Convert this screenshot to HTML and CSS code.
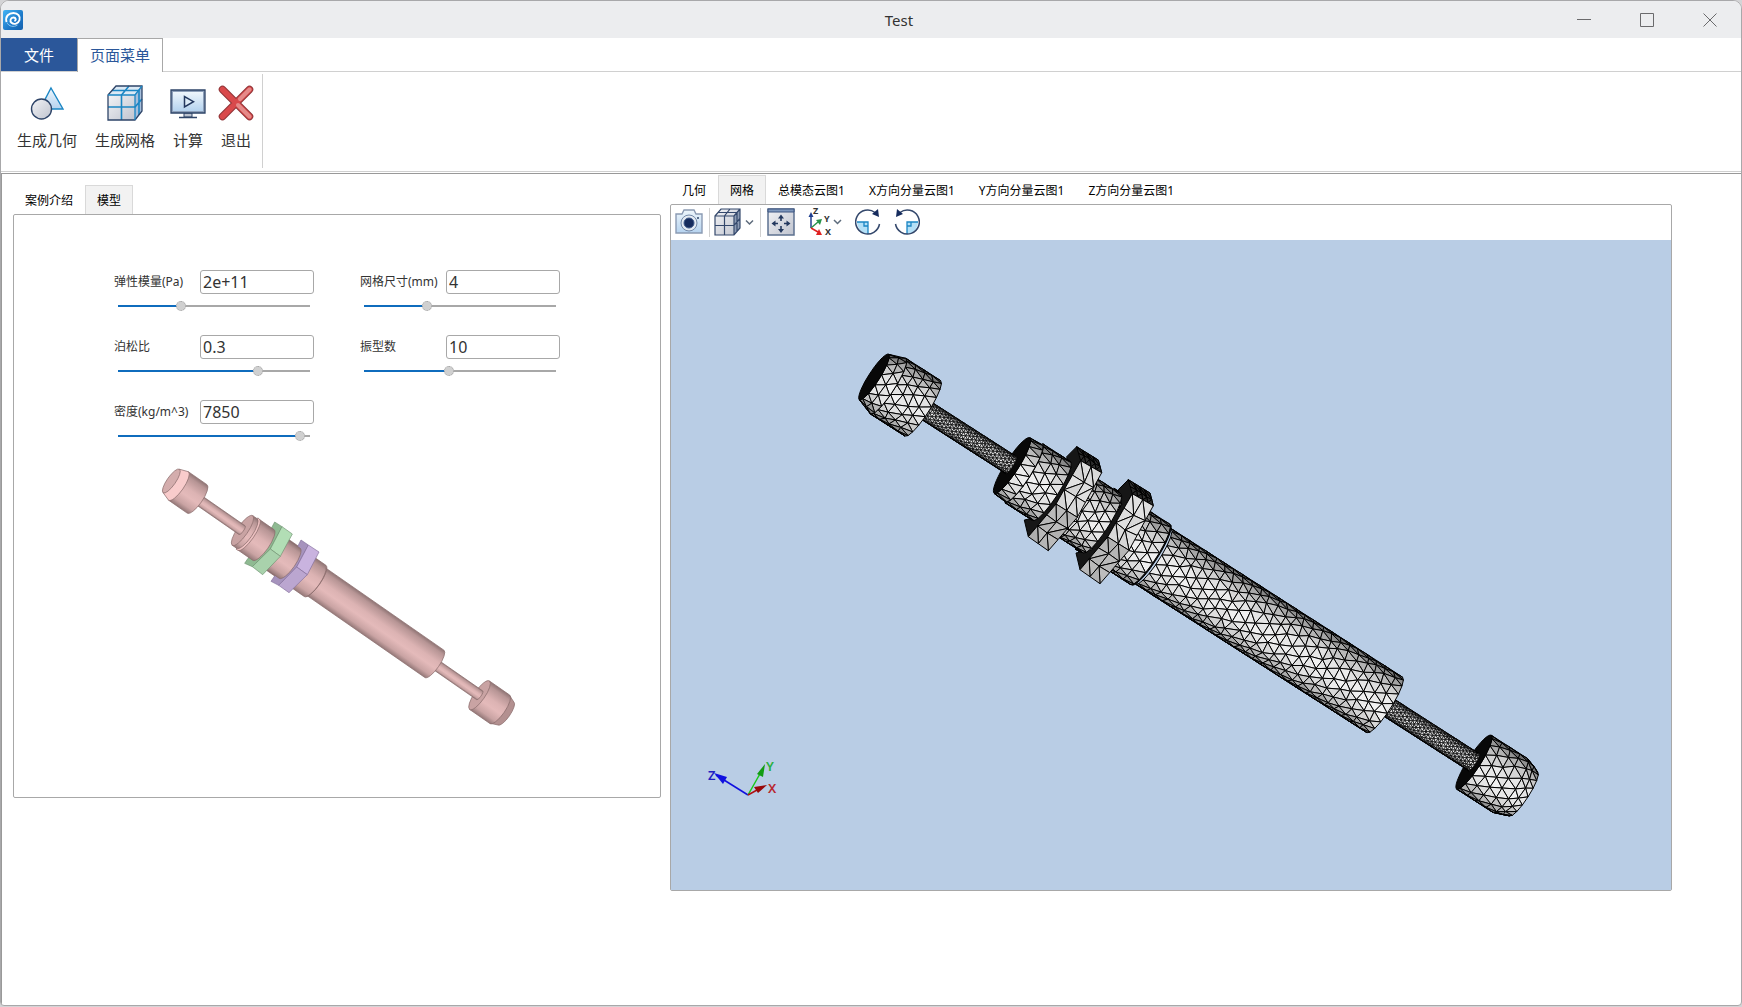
FILE: index.html
```html
<!DOCTYPE html>
<html lang="zh-CN">
  <head>
    <meta charset="utf-8">
    <title>Test</title>
    <link rel="stylesheet" href="styles.css">
  </head>
  <body>
    <div class="window">
      <header class="title-bar">
        <svg class="app-icon" viewBox="0 0 20 20">
          <defs>
            <linearGradient id="logo" x1="0" y1="0" x2="1" y2="1"><stop offset="0" stop-color="#43b4f5"/><stop offset=".6" stop-color="#1c78c8"/><stop offset="1" stop-color="#1561ad"/></linearGradient>
          </defs>
          <rect width="20" height="20" rx="2" fill="url(#logo)"/>
          <path d="M3.5 12C2 6 6 3 10.500 3C15 3 17.500 6.500 16.500 10C15.500 13.500 11 15 8.500 12.800C6.500 11 7.500 7.500 10.500 7.500C13 7.500 13.500 10.500 11.300 10.900" fill="none" stroke="#fff" stroke-width="1.900"/>
          <path d="M4 12.500C5.500 16.500 11 17.500 14.500 15" fill="none" stroke="#8cc7f0" stroke-width="1"/>
        </svg>
        <h1>Test</h1>
        <div class="window-buttons">
          <button aria-label="最小化"><svg viewBox="0 0 14 14"><path d="M0 6.500H14"/></svg></button>
          <button aria-label="最大化"><svg viewBox="0 0 14 14"><path d="M.5 .5H13.500V13.500H.5Z"/></svg></button>
          <button aria-label="关闭"><svg viewBox="0 0 14 14"><path d="M.5 .5L13.500 13.500M13.500 .5L.5 13.500"/></svg></button>
        </div>
      </header>

      <nav class="ribbon-tabs">
        <button class="file-tab">文件</button>
        <button class="menu-tab">页面菜单</button>
      </nav>

      <div class="ribbon">
        <div class="ribbon-group">
          <button class="tool">
            <svg viewBox="0 0 36 36">
              <defs>
                <linearGradient id="sky" x1="0" y1="0" x2="0" y2="1"><stop offset="0" stop-color="#eef6fc"/><stop offset="1" stop-color="#b5d3ef"/></linearGradient>
                <linearGradient id="steel" x1="0" y1="0" x2="1" y2="1"><stop offset="0" stop-color="#f2f3f6"/><stop offset="1" stop-color="#bfc3ce"/></linearGradient>
              </defs>
              <path d="M22 3L34 24H11Z" fill="url(#sky)" stroke="#1b86c4" stroke-width="1.400"/>
              <circle cx="12.500" cy="24" r="10" fill="url(#steel)" stroke="#2e4468" stroke-width="1.400"/>
            </svg>
            <span>生成几何</span>
          </button>
          <button class="tool">
            <svg viewBox="0 0 36 36">
              <path d="M1 10L9 1H35L28 10V35H1Z" fill="#dbe9f5"/>
              <path d="M1 10H28V35H1Z" fill="url(#steel)"/>
              <path d="M28 10L35 1V26L28 35Z" fill="#a6bfdc"/>
              <path d="M1 22H28L35 14M14.500 35V10L22 1M5 5.500H32V30" fill="none" stroke="#1b86c4" stroke-width="1.600"/>
              <path d="M1 10L9 1H35V26L28 35H1Z" fill="none" stroke="#2e4468" stroke-width="1.300"/>
              <path d="M1 10H28V35M28 10L35 1" fill="none" stroke="#1b86c4" stroke-width="1.300"/>
            </svg>
            <span>生成网格</span>
          </button>
          <button class="tool">
            <svg viewBox="0 0 36 36">
              <path d="M14 28H22V32H14Z" fill="#bcc3cf" stroke="#2e4468"/>
              <path d="M9 32.500H27" stroke="#2e4468" stroke-width="1.600"/>
              <path d="M1 5H35V28H1Z" fill="#8ea0ba" stroke="#2e4468" stroke-width="1.300"/>
              <path d="M3 7H33V26H3Z" fill="url(#sky)"/>
              <path d="M14.500 11.500V22L23.500 16.700Z" fill="#dcebf7" stroke="#24395f" stroke-width="1.500"/>
            </svg>
            <span>计算</span>
          </button>
          <button class="tool">
            <svg viewBox="0 0 36 36">
              <path d="M4.500 4.500L31.500 31.500M31.500 4.500L4.500 31.500" stroke="#8f3437" stroke-width="7.500" stroke-linecap="round"/>
              <path d="M4.500 4.500L31.500 31.500M31.500 4.500L4.500 31.500" stroke="#d9494b" stroke-width="5.500" stroke-linecap="round"/>
              <path d="M31.500 4.500L22 14M20 20L31.500 31.500" stroke="#e58a89" stroke-width="4" stroke-linecap="round"/>
            </svg>
            <span>退出</span>
          </button>
        </div>
      </div>

      <main class="workspace">
        <section class="side">
          <div class="tabs">
            <button>案例介绍</button>
            <button class="active">模型</button>
          </div>
          <div class="panel model-panel">
            <form class="params">
              <div class="field">
                <label for="elastic">弹性模量(Pa)</label>
                <input type="text" id="elastic" value="2e+11">
                <input type="range" aria-label="弹性模量" value="32" style="--fill: 32%">
              </div>
              <div class="field">
                <label for="mesh-size">网格尺寸(mm)</label>
                <input type="text" id="mesh-size" value="4">
                <input type="range" aria-label="网格尺寸" value="32" style="--fill: 32%">
              </div>
              <div class="field">
                <label for="poisson">泊松比</label>
                <input type="text" id="poisson" value="0.3">
                <input type="range" aria-label="泊松比" value="74" style="--fill: 74%">
              </div>
              <div class="field">
                <label for="modes">振型数</label>
                <input type="text" id="modes" value="10">
                <input type="range" aria-label="振型数" value="44" style="--fill: 44%">
              </div>
              <div class="field">
                <label for="density">密度(kg/m^3)</label>
                <input type="text" id="density" value="7850">
                <input type="range" aria-label="密度" value="97" style="--fill: 97%">
              </div>
            </form>

            <svg class="model" viewBox="0 0 1200 870">
              <defs>
                <linearGradient id="pink" x1="0" y1="0" x2="0" y2="1">
                  <stop offset="0" stop-color="#8e7474"/><stop offset=".12" stop-color="#b79595"/>
                  <stop offset=".4" stop-color="#dcb3b3"/><stop offset=".6" stop-color="#e4baba"/>
                  <stop offset=".85" stop-color="#c9a3a3"/><stop offset="1" stop-color="#947878"/>
                </linearGradient>
              </defs>
              <!-- drawn from the far end to the near end -->
              <g class="pink" transform="translate(94 93) rotate(34.8)">
                <path fill="#b39090" d="M1200 -51L1222 -42A13 42 0 0 1 1222 42L1200 51Z"/>
                <path d="M1126 -52H1200A16 52 0 0 1 1200 52H1126Z"/>
                <ellipse fill="#c9a3a3" cx="1126" cy="0" rx="16" ry="52"/>
                <path d="M961 -16H1126A5 16 0 0 1 1126 16H961Z"/>
                <path d="M525 -50H961A15 50 0 0 1 961 50H525Z"/>
                <path d="M380 -57H525A17 57 0 0 1 525 57H380Z"/>
                <path fill="none" stroke="#5c4444" stroke-width="4" d="M529 -52A16 55 0 0 1 529 55"/>
              </g>
              <g class="purple">
                <path fill="#a693bd" d="M483 270L505 285L470 351L416 406L393 394L404 378L450 335Z"/>
                <path fill="#c9b3df" d="M505 285L537 306L502 374L470 351Z"/>
                <path fill="#bba6d0" d="M470 351L502 374L447 428L416 406Z"/>
              </g>
              <g class="pink" transform="translate(94 93) rotate(34.8)">
                <path d="M330 -55H432A17 55 0 0 1 432 55H330Z"/>
              </g>
              <g class="green">
                <path fill="#8fba92" d="M404 216L426 230L391 297L337 350L314 340L324 325L370 280Z"/>
                <path fill="#b2deb5" d="M426 230L457 252L421 319L391 297Z"/>
                <path fill="#a9d2ac" d="M391 297L421 319L368 374L337 350Z"/>
              </g>
              <g class="pink" transform="translate(94 93) rotate(34.8)">
                <path d="M282 -56H336A17 56 0 0 1 336 56H282Z"/>
                <path fill="#ecc0c0" d="M276 -57H282A17 57 0 0 1 282 57H276Z"/>
                <path d="M260 -54H276A16 54 0 0 1 276 54H260Z"/>
                <ellipse fill="#c9a3a3" cx="260" cy="0" rx="16" ry="54"/>
                <path d="M94 -16H258A5 16 0 0 1 258 16H94Z"/>
                <path d="M26 -52H94A16 52 0 0 1 94 52H26Z"/>
                <path fill="#f9cccc" d="M0 -43L26 -52A16 52 0 0 1 26 52L0 43Z"/>
                <ellipse fill="#d4adad" cx="0" cy="0" rx="13" ry="43"/>
              </g>
            </svg>
          </div>
        </section>

        <section class="result">
          <div class="tabs">
            <button>几何</button>
            <button class="active">网格</button>
            <button>总模态云图1</button>
            <button>X方向分量云图1</button>
            <button>Y方向分量云图1</button>
            <button>Z方向分量云图1</button>
          </div>
          <div class="panel">
            <div class="view-tools">
              <button aria-label="截图">
                <svg width="28" height="28" viewBox="0 0 28 28">
                  <path d="M1 6H7L9 2H19L21 6H27V25H1Z" fill="url(#sky)" stroke="#8a9ab3" stroke-width="1.400"/>
                  <circle cx="14" cy="15" r="8" fill="#e4ebf3" stroke="#7389a8"/>
                  <circle cx="14" cy="15" r="5" fill="#162c5e" stroke="#3e5a8a"/>
                  <circle cx="23" cy="10" r="1" fill="#2e4468"/>
                </svg>
              </button>
              <i class="split"></i>
              <button aria-label="显示模式">
                <svg width="40" height="28" viewBox="0 0 40 28">
                  <path d="M1 8L7 1H26L20 8V27H1Z" fill="url(#steel)"/>
                  <path d="M20 8L26 1V20L20 27Z" fill="#8d9cb5"/>
                  <path d="M1 8L7 1H26V20L20 27H1ZM1 8H20V27M20 8L26 1M1 17.500H20L26 10.500M10.500 27V8L16 1M4 4.500H23V23.500" fill="none" stroke="#34486c" stroke-width="1.200"/>
                  <path d="M32 12.500L35.500 16L39 12.500" fill="none" stroke="#5d6b7c" stroke-width="1.500"/>
                </svg>
              </button>
              <i class="split"></i>
              <button aria-label="适应窗口">
                <svg width="28" height="28" viewBox="0 0 28 28">
                  <path d="M1 1H27V27H1Z" fill="url(#steel)" stroke="#5d7190" stroke-width="1.500"/>
                  <path d="M1 1H27V4H1Z" fill="#7f98bd" stroke="#3d5480"/>
                  <path d="M14 9V13M14 18V22M7 15.500H11M17 15.500H21" stroke="#24395f" stroke-width="1.600"/>
                  <path d="M14 6.500L17 10.500H11ZM14 25L17 21H11ZM4.500 15.500L8.500 12.500V18.500ZM23.500 15.500L19.500 12.500V18.500Z" fill="#24395f"/>
                </svg>
              </button>
              <button aria-label="视角">
                <svg width="34" height="30" viewBox="0 0 34 30">
                  <path d="M3 21V7" stroke="#1f3f8f" stroke-width="1.500"/><path d="M3 5L5.500 10H.5Z" fill="#1f3f8f"/>
                  <path d="M3 21L10 15" stroke="#27934a" stroke-width="1.500"/><path d="M14 12L12 18L8 13Z" fill="#27934a"/>
                  <path d="M3 21L10 25" stroke="#e02222" stroke-width="1.500"/><path d="M14 28L8 28L11 22Z" fill="#e02222"/>
                  <g class="axis-small"><text x="5" y="7">Z</text><text x="16" y="15">Y</text><text x="17" y="28">X</text></g>
                  <path d="M26 13L29.500 16.500L33 13" fill="none" stroke="#5d6b7c" stroke-width="1.500"/>
                </svg>
              </button>
              <button aria-label="顺时针旋转">
                <svg width="26" height="28" viewBox="0 0 26 28">
                  <path d="M2 14H13V26A12 12 0 0 1 2 14Z" fill="#b4e0f7"/>
                  <path d="M2 14H13V26M9 14V18H13" fill="none" stroke="#1b86c4" stroke-width="1.300"/>
                  <path d="M20 4.500A12 12 0 1 0 24.500 16" fill="none" stroke="#34486c" stroke-width="1.500"/>
                  <path d="M17 6L23 1L24 9Z" fill="#162c5e"/>
                </svg>
              </button>
              <button aria-label="逆时针旋转">
                <svg width="26" height="28" viewBox="0 0 26 28">
                  <path d="M24 14H13V26A12 12 0 0 0 24 14Z" fill="#b4e0f7"/>
                  <path d="M24 14H13V26M17 14V18H13" fill="none" stroke="#1b86c4" stroke-width="1.300"/>
                  <path d="M6 4.500A12 12 0 1 1 1.500 16" fill="none" stroke="#34486c" stroke-width="1.500"/>
                  <path d="M9 6L3 1L2 9Z" fill="#162c5e"/>
                </svg>
              </button>
            </div>
            <svg class="viewport" viewBox="0 0 1000 650">
              <g id="mesh"></g>
              <g class="triad">
                <path d="M77 555L45 535" stroke="#1010e0" stroke-width="1.500"/><path d="M43 533L56 537L52 544Z" fill="#1010e0"/>
                <path d="M77 555L90 532" stroke="#18c818" stroke-width="1.500"/><path d="M94 524L92 537L86 534Z" fill="#129c12"/>
                <path d="M77 555L86 550" stroke="#b01010" stroke-width="1.500"/><path d="M96 545L87 553L83 547Z" fill="#980808"/>
                <text x="37" y="540" fill="#2020c0">Z</text>
                <text x="95" y="531" fill="#28b040">Y</text>
                <text x="97" y="553" fill="#b82830">X</text>
              </g>
            </svg>
          </div>
        </section>
      </main>
    </div>

    <script src="mesh.js"></script>
  </body>
</html>
```

FILE: styles.css
```css
* {
  box-sizing: border-box;
}

body {
  margin: 0;
  background-color: #d4d4d6;
  font-family: "Noto Sans", "Noto Sans CJK SC", sans-serif;
  color: #333333;
}

button {
  margin: 0;
  padding: 0;
  border: none;
  background: none;
  font-family: inherit;
  color: inherit;
}

svg {
  display: block;
}

.window {
  display: flex;
  flex-direction: column;
  min-height: calc(100vh - 1px);
  background-color: #ffffff;
  border: 1px solid #a8a8aa;
  border-radius: 9px 9px 4px 4px;
  overflow: hidden;
}

/* title bar */
.title-bar {
  display: grid;
  grid-template-columns: 1fr auto 1fr;
  align-items: center;
  height: 37px;
  padding-left: 2px;
  background-color: #ecedef;
}

.app-icon {
  width: 20px;
  height: 20px;
}

.title-bar h1 {
  margin: 0;
  padding-left: 54px;
  font-size: 15px;
  font-weight: normal;
}

.window-buttons {
  display: flex;
  justify-content: flex-end;
}

.window-buttons button {
  display: flex;
  align-items: center;
  justify-content: center;
  width: 63px;
  height: 36px;
}

.window-buttons svg {
  width: 14px;
  height: 14px;
  fill: none;
  stroke: #6a6a6c;
}

/* ribbon */
.ribbon-tabs {
  display: flex;
  height: 34px;
  border-bottom: 1px solid #d0d0d0;
}

.ribbon-tabs button {
  height: 33px;
  font-size: 15px;
}

.file-tab {
  width: 76px;
  background-color: #2b579a;
  color: #ffffff;
}

.ribbon-tabs .menu-tab {
  width: 86px;
  height: 34px;
  border: 1px solid #a8a8a8;
  border-bottom: none;
  background-color: #ffffff;
  line-height: 31px;
  color: #2b579a;
}

.ribbon {
  height: 100px;
  padding: 2px 0 4px;
  border-bottom: 1px solid #d0d0d0;
}

.ribbon-group {
  display: flex;
  align-items: flex-start;
  width: max-content;
  height: 94px;
  padding: 11px 2px 0 7px;
  border-right: 1px solid #d0d0d0;
}

.tool {
  display: flex;
  flex-direction: column;
  align-items: center;
  padding: 0 6px;
  font-size: 15px;
  line-height: 22px;
}

.tool svg {
  width: 36px;
  height: 36px;
}

.tool span {
  padding: 8px 3px 0;
}

/* workspace */
.workspace {
  display: flex;
  flex: 1;
  align-items: flex-start;
  gap: 9px;
  margin-top: 1px;
  padding: 0 69px 0 11px;
  border-top: 1px solid #999999;
  border-left: 1px solid #999999;
}

.side {
  flex: 647;
  padding-top: 11px;
}

.result {
  flex: 1002;
  padding-top: 1px;
}

.tabs {
  display: flex;
  height: 29px;
}

.tabs button {
  padding: 0 11px;
  border: 1px solid transparent;
  border-bottom: none;
  font-size: 12px;
  white-space: nowrap;
  color: #000000;
}

.tabs .active {
  background-color: #f2f2f2;
  border-color: #d9d9d9;
}

.panel {
  border: 1px solid #a8a8a8;
  border-radius: 2px;
}

.model-panel {
  padding: 55px 100px 57px;
}

.params {
  display: grid;
  grid-template-columns: 200px 200px;
  column-gap: 46px;
  row-gap: 17px;
}

.field {
  display: flex;
  flex-wrap: wrap;
  align-items: center;
  justify-content: space-between;
}

.field label {
  font-size: 12px;
  line-height: 24px;
}

.field input[type="text"] {
  width: 114px;
  height: 24px;
  padding: 0 2px;
  border: 1px solid #a8a8a8;
  border-radius: 3px;
  font-family: inherit;
  font-size: 16px;
  line-height: 22px;
  color: #333333;
}

.field input[type="range"] {
  -webkit-appearance: none;
  appearance: none;
  width: 192px;
  height: 24px;
  margin: 0 4px;
  background: none;
}

.field input[type="range"]::-webkit-slider-runnable-track {
  height: 2px;
  background: linear-gradient(to right, #0f6cbd var(--fill), #a8a8a8 var(--fill));
}

.field input[type="range"]::-webkit-slider-thumb {
  -webkit-appearance: none;
  width: 10px;
  height: 10px;
  margin-top: -4px;
  border: 1px dotted #a0a0a0;
  border-radius: 50%;
  background-color: #d0d0d0;
}

.model {
  width: 400px;
  height: 290px;
  margin: 2px 0 0 26px;
}

.pink path,
.pink ellipse {
  stroke: #8a6c6c;
  stroke-width: 2;
}

.pink path:not([fill]) {
  fill: url(#pink);
}

.green path {
  stroke: #6f9473;
  stroke-width: 2;
}

.purple path {
  stroke: #83709c;
  stroke-width: 2;
}

/* 3D view */
.view-tools {
  display: flex;
  align-items: center;
  height: 35px;
  padding: 0 4px 1px;
}

.view-tools button + button {
  margin-left: 13px;
}

.split {
  width: 1px;
  height: 29px;
  margin: 0 4px 0 6px;
  background-color: #d0d0d0;
}

.split + button + .split {
  margin: 0 6px;
}

.viewport {
  width: 100%;
  background-color: #b9cde5;
}

.triad text {
  font-size: 13px;
  font-weight: 600;
}

.axis-small text {
  font-size: 9px;
  font-weight: bold;
  fill: #333333;
}

#mesh polygon {
  stroke: #000000;
  stroke-width: 1;
  stroke-linejoin: round;
}

#mesh .fine polygon {
  stroke-width: 0.7;
}
```

FILE: mesh.js
```js
const mesh = document.getElementById('mesh');
const angle = 32.7 * Math.PI / 180;
const origin = [203, 137];
const tilt = 0.2;
let seed = 7;

function random() {
  seed = (seed * 16807) % 2147483647;
  return seed / 2147483647 - 0.5;
}

// axis coordinates -> view coordinates
function place(x, y) {
  return [
    origin[0] + x * Math.cos(angle) - y * Math.sin(angle),
    origin[1] + x * Math.sin(angle) + y * Math.cos(angle)
  ];
}

function poly(points, gray) {
  const g = Math.max(0, Math.round(gray));
  const list = points.map(p => p[0].toFixed(1) + ',' + p[1].toFixed(1)).join(' ');
  return `<polygon points="${list}" fill="rgb(${g},${g},${g})"/>`;
}

// grid of points -> alternating triangles
function triangles(grid, shade) {
  let out = '';
  for (let i = 0; i < grid.length - 1; i++) {
    for (let j = 0; j < grid[i].length - 1; j++) {
      const a = grid[i][j], b = grid[i][j + 1], c = grid[i + 1][j], d = grid[i + 1][j + 1];
      const pair = i % 2 ? [[a, b, c], [b, d, c]] : [[a, b, d], [a, d, c]];
      pair.forEach(t => { out += poly(t, shade(t) + random() * 14); });
    }
  }
  return out;
}

// visible half of a cylinder or cone, every second ring is shifted by half a step
function tube(x1, x2, r1, r2, size) {
  const rows = Math.max(6, Math.round(Math.PI * r1 / size));
  const rings = Math.max(1, Math.round((x2 - x1) / (size * 0.87)));
  const grid = [];
  for (let i = 0; i <= rings; i++) {
    const s = i / rings;
    const r = r1 + (r2 - r1) * s;
    const ring = [];
    for (let j = 0; j <= rows + 1; j++) {
      const n = Math.min(rows, Math.max(0, i % 2 ? j - 0.5 : j));
      const inside = i > 0 && i < rings && n > 0 && n < rows;
      const t = Math.PI * (n / rows - 0.5) + (inside ? random() * 0.08 : 0);
      const x = x1 + (x2 - x1) * s + (inside ? random() * size * 0.25 : 0);
      ring.push([...place(x + r * tilt * Math.cos(t), r * Math.sin(t)), t]);
    }
    grid.push(ring);
  }
  return triangles(grid, p => {
    const t = (p[0][2] + p[1][2] + p[2][2]) / 3;
    return 70 + 166 * Math.cos(t - 0.1);
  });
}

function cap(x, r) {
  const ring = [];
  for (let i = 0; i < 36; i++) {
    const t = i * Math.PI / 18;
    ring.push(place(x + r * tilt * Math.cos(t), r * Math.sin(t)));
  }
  return poly(ring, 8);
}

function face(corners, n, m, gray) {
  const grid = [];
  for (let i = 0; i <= n; i++) {
    const row = [];
    for (let j = 0; j <= m; j++) {
      const u = j / m, v = i / n;
      const edge = i === 0 || j === 0 || i === n || j === m;
      row.push([0, 1].map(k =>
        (1 - v) * ((1 - u) * corners[0][k] + u * corners[1][k]) +
        v * ((1 - u) * corners[3][k] + u * corners[2][k]) + (edge ? 0 : random() * 3)));
    }
    grid.push(row);
  }
  return triangles(grid, () => gray);
}

function nut(dx, dy) {
  const p = (x, y) => [169 + (x + dx) / 3, 100 + (y + dy) / 3];
  return poly([p(710, 320), p(775, 360), p(785, 398), p(722, 362), p(648, 492), p(565, 590), p(553, 540), p(600, 530), p(690, 395), p(680, 350)], 22) +
    face([p(710, 320), p(775, 360), p(785, 398), p(722, 362)], 2, 4, 45) +
    face([p(722, 362), p(785, 398), p(712, 532), p(648, 492)], 3, 2, 220) +
    face([p(648, 492), p(712, 532), p(625, 632), p(565, 590)], 3, 2, 182);
}

// far parts first, near parts cover them
mesh.innerHTML =
  tube(756, 772, 32, 26, 12) +
  tube(713, 756, 32, 32, 12) +
  cap(713, 32) +
  '<g class="fine">' + tube(606, 713, 10, 10, 4) + '</g>' +
  tube(332, 607, 33, 33, 12) +
  cap(329, 36) +
  tube(262, 328, 36, 36, 12) +
  nut(155, 99) +
  tube(212, 271, 35, 35, 12) +
  nut(0, 0) +
  tube(178, 211, 35, 35, 12) +
  tube(164, 178, 33, 34, 12) +
  cap(164, 33) +
  '<g class="fine">' + tube(58, 163, 10, 10, 4) + '</g>' +
  tube(17, 58, 33, 33, 12) +
  tube(0, 17, 27, 33, 12) +
  cap(0, 27);
```
